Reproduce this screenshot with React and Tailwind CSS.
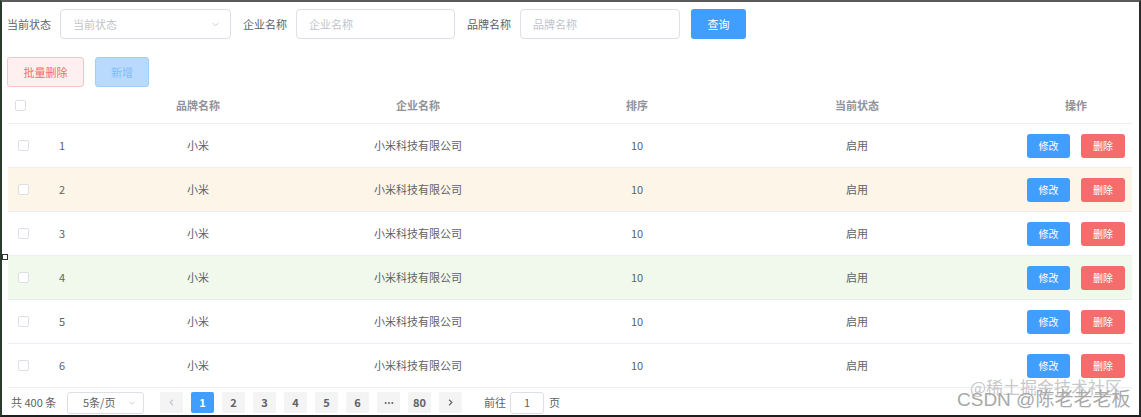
import React from "react";

const rows = [1, 2, 3, 4, 5, 6];

function Chevron({ className = "" }) {
  return (
    <svg viewBox="0 0 12 12" className={className} fill="none" stroke="currentColor" strokeWidth="1">
      <path d="M3 4.5 L6 7.5 L9 4.5" />
    </svg>
  );
}

function Arrow({ dir, className = "" }) {
  return (
    <svg viewBox="0 0 12 12" className={className} fill="none" stroke="currentColor" strokeWidth="1.2">
      {dir === "left" ? <path d="M7.5 3 L4.5 6 L7.5 9" /> : <path d="M4.5 3 L7.5 6 L4.5 9" />}
    </svg>
  );
}

function Dots() {
  return (
    <svg viewBox="0 0 12 4" className="w-[10px] h-[4px]" fill="currentColor">
      <circle cx="2" cy="2" r="1.2" />
      <circle cx="6" cy="2" r="1.2" />
      <circle cx="10" cy="2" r="1.2" />
    </svg>
  );
}

function Checkbox() {
  return <div className="w-[11px] h-[11px] rounded-[2px] border border-[#dcdfe6] bg-white" />;
}

export default function App() {
  const font = "font-['Noto_Sans_CJK_SC','Noto_Sans',sans-serif]";
  return (
    <div
      className={`relative w-[1141px] h-[417px] bg-white box-border overflow-hidden border-t-2 border-t-[#5b5b5b] border-l-2 border-l-[#2c3a2c] border-r-2 border-r-[#2a2a2a] border-b-2 border-b-[#1e1e1e] ${font} text-[11px] text-[#606266]`}
    >
      {/* search form */}
      <div className="flex items-center pl-[5px] pt-[7px] h-[37px]">
        <span className="w-[44px] text-[#606266]">当前状态</span>
        <div className="ml-[9px] w-[171px] h-[30px] rounded-[4px] border border-[#dcdfe6] flex items-center justify-between pl-[12px] pr-[9px]">
          <span className="text-[#c0c4cc]">当前状态</span>
          <Chevron className="w-[11px] h-[11px] text-[#c0c4cc]" />
        </div>
        <span className="ml-[12px] w-[44px]">企业名称</span>
        <div className="ml-[9px] w-[159px] h-[30px] rounded-[4px] border border-[#dcdfe6] flex items-center pl-[12px]">
          <span className="text-[#c0c4cc]">企业名称</span>
        </div>
        <span className="ml-[12px] w-[44px]">品牌名称</span>
        <div className="ml-[9px] w-[160px] h-[30px] rounded-[4px] border border-[#dcdfe6] flex items-center pl-[12px]">
          <span className="text-[#c0c4cc]">品牌名称</span>
        </div>
        <div className="ml-[11px] w-[55px] h-[30px] rounded-[3px] bg-[#409eff] text-white flex items-center justify-center">
          查询
        </div>
      </div>

      {/* action buttons */}
      <div className="flex items-center pl-[5px] mt-[18px] h-[30px]">
        <div className="w-[77px] h-[30px] rounded-[3px] bg-[#fef0f0] border border-[#fbc4c4] text-[#f56c6c] flex items-center justify-center">
          批量删除
        </div>
        <div className="ml-[11px] w-[54px] h-[30px] rounded-[3px] bg-[#b9dafd] border border-[#a0cfff] text-[#7fbcfc] flex items-center justify-center">
          新增
        </div>
      </div>

      {/* table */}
      <div className="ml-[6px] w-[1124px]">
        <div className="flex items-center h-[37px] border-b border-[#ebeef5] font-bold text-[#909399]">
          <div className="w-[30px] pl-[7px]">
            <Checkbox />
          </div>
          <div className="w-[48px]" />
          <div className="w-[224px] text-center">品牌名称</div>
          <div className="w-[216px] text-center">企业名称</div>
          <div className="w-[222px] text-center">排序</div>
          <div className="w-[218px] text-center">当前状态</div>
          <div className="flex-1 flex justify-end pr-[7px]">
            <div className="w-[98px] text-center">操作</div>
          </div>
        </div>
        {rows.map((n) => {
          const bg = n === 2 ? "bg-[#fdf5e8]" : n === 4 ? "bg-[#f0f9eb]" : "bg-white";
          return (
            <div key={n} className={`flex items-center h-[44px] border-b border-[#ebeef5] ${bg}`}>
              <div className="w-[30px] pl-[10px]">
                <Checkbox />
              </div>
              <div className="w-[48px] text-center">{n}</div>
              <div className="w-[224px] text-center">小米</div>
              <div className="w-[216px] text-center">小米科技有限公司</div>
              <div className="w-[222px] text-center">10</div>
              <div className="w-[218px] text-center">启用</div>
              <div className="flex-1 flex justify-end pr-[7px] gap-[11px]">
                <div className="w-[43px] h-[24px] rounded-[3px] bg-[#409eff] text-white text-[10px] flex items-center justify-center">
                  修改
                </div>
                <div className="w-[44px] h-[24px] rounded-[3px] bg-[#f56c6c] text-white text-[10px] flex items-center justify-center">
                  删除
                </div>
              </div>
            </div>
          );
        })}
      </div>

      {/* pagination */}
      <div className="flex items-center pl-[9px] pt-[3px] h-[26px]">
        <span className="w-[48px]">共 400 条</span>
        <div className="ml-[8px] w-[77px] h-[22px] rounded-[3px] border border-[#dcdfe6] flex items-center justify-between pl-[15px] pr-[6px]">
          <span>5条/页</span>
          <Chevron className="w-[10px] h-[10px] text-[#c0c4cc]" />
        </div>
        <div className="ml-[16px] flex items-center gap-[8px]">
          <div className="w-[23px] h-[21px] rounded-[2px] bg-[#f4f4f5] flex items-center justify-center text-[#c0c4cc]">
            <Arrow dir="left" className="w-[11px] h-[11px]" />
          </div>
          {["1", "2", "3", "4", "5", "6"].map((p) => (
            <div
              key={p}
              className={`w-[23px] h-[21px] rounded-[2px] flex items-center justify-center font-bold text-[11px] ${
                p === "1" ? "bg-[#409eff] text-white" : "bg-[#f4f4f5] text-[#606266]"
              }`}
            >
              {p}
            </div>
          ))}
          <div className="w-[23px] h-[21px] rounded-[2px] bg-[#f4f4f5] flex items-center justify-center text-[#606266]">
            <Dots />
          </div>
          <div className="w-[23px] h-[21px] rounded-[2px] bg-[#f4f4f5] flex items-center justify-center font-bold text-[11px] text-[#606266]">
            80
          </div>
          <div className="w-[23px] h-[21px] rounded-[2px] bg-[#f4f4f5] flex items-center justify-center text-[#606266]">
            <Arrow dir="right" className="w-[11px] h-[11px]" />
          </div>
        </div>
        <span className="ml-[22px]">前往</span>
        <div className="ml-[4px] w-[34px] h-[22px] rounded-[3px] border border-[#dcdfe6] flex items-center justify-center text-[#606266]">
          1
        </div>
        <span className="ml-[5px]">页</span>
      </div>

      {/* small handle at left edge */}
      <div className="absolute left-0 top-[252px] w-[6px] h-[6px] border border-[#333] bg-white" />

      {/* watermark */}
      <div className="absolute left-[968px] top-[376px] text-[17px] leading-none text-[#c8c8c8] whitespace-nowrap">
        @稀土掘金技术社区
      </div>
      <div className="absolute left-[955px] top-[388px] text-[19px] leading-none text-[#a8a8a8] whitespace-nowrap font-['Liberation_Sans','Noto_Sans_CJK_SC',sans-serif]">
        CSDN @陈老老老板
      </div>
    </div>
  );
}
